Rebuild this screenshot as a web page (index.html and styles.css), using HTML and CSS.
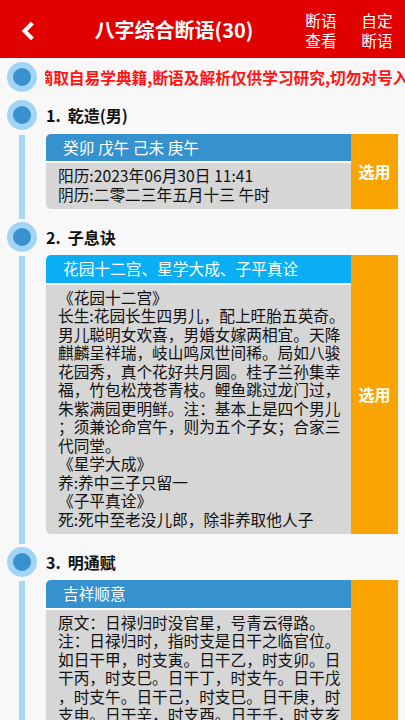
FILE: index.html
```html
<!DOCTYPE html>
<html lang="zh">
<head>
<meta charset="utf-8">
<title>八字综合断语</title>
<link rel="stylesheet" href="styles.css">
</head>
<body>
<header class="topbar">
  <div class="back">
    <svg width="14" height="18" viewBox="0 0 14 18"><polyline points="10,2.5 3.5,9 10,15.5" fill="none" stroke="#fff" stroke-width="4" stroke-linecap="square" stroke-linejoin="miter"/></svg>
  </div>
  <div class="title">八字综合断语(30)</div>
  <div class="tbtn">断语<br>查看</div>
  <div class="tbtn">自定<br>断语</div>
</header>

<div class="row marquee-row">
  <div class="dotcol"><span class="dot"></span></div>
  <div class="marquee"><span class="mtext">摘取自易学典籍,断语及解析仅供学习研究,切勿对号入座</span></div>
</div>

<section class="item">
  <div class="row">
    <div class="dotcol"><span class="dot"></span></div>
    <div class="ititle"><span class="num">1.</span>乾造(男)</div>
  </div>
  <div class="body">
    <div class="linecol"><span class="vline"></span></div>
    <div class="card">
      <div class="main">
        <div class="chead">癸卯 戊午 己未 庚午</div>
        <div class="ctext">阳历:2023年06月30日 11:41<br>阴历:二零二三年五月十三 午时</div>
      </div>
      <div class="pick">选用</div>
    </div>
  </div>
</section>

<section class="item">
  <div class="row">
    <div class="dotcol"><span class="dot"></span></div>
    <div class="ititle"><span class="num">2.</span>子息诀</div>
  </div>
  <div class="body">
    <div class="linecol"><span class="vline"></span></div>
    <div class="card">
      <div class="main">
        <div class="chead alt">花园十二宫、星学大成、子平真诠</div>
        <div class="ctext">《花园十二宫》<br>长生:花园长生四男儿，配上旺胎五英奇。<br>男儿聪明女欢喜，男婚女嫁两相宜。天降<br>麒麟呈祥瑞，岐山鸣凤世间稀。局如八骏<br>花园秀，真个花好共月圆。桂子兰孙集幸<br>福，竹包松茂苍青枝。鲤鱼跳过龙门过，<br>朱紫满园更明鲜。注：基本上是四个男儿<br>；须兼论命宫午，则为五个子女；合家三<br>代同堂。<br>《星学大成》<br>养:养中三子只留一<br>《子平真诠》<br>死:死中至老没儿郎，除非养取他人子</div>
      </div>
      <div class="pick">选用</div>
    </div>
  </div>
</section>

<section class="item">
  <div class="row">
    <div class="dotcol"><span class="dot"></span></div>
    <div class="ititle"><span class="num">3.</span>明通赋</div>
  </div>
  <div class="body">
    <div class="linecol"><span class="vline"></span></div>
    <div class="card">
      <div class="main">
        <div class="chead">吉祥顺意</div>
        <div class="ctext">原文：日禄归时没官星，号青云得路。<br>注：日禄归时，指时支是日干之临官位。<br>如日干甲，时支寅。日干乙，时支卯。日<br>干丙，时支巳。日干丁，时支午。日干戊<br>，时支午。日干己，时支巳。日干庚，时<br>支申。日干辛，时支酉。日干壬，时支亥<br>。日干癸，时支子。日禄归时，又不见官<br>星，是为青云得路之格。此命主平生多<br>得贵人相助，少年得志，名利双收，仕<br>途顺遂，步步高升。若柱中再见财星生<br>扶，则富贵两全；若见七杀混杂，则须<br>有制化方吉。大运行至官乡，亦可发福<br>，但不宜刑冲破害，否则反主波折。<br>总之以身旺禄强、无官杀为上格。</div>
      </div>
      <div class="pick">选用</div>
    </div>
  </div>
</section>
</body>
</html>
```

FILE: styles.css
```css
* { box-sizing: border-box; }
html, body { margin: 0; padding: 0; }
body {
  background: #f8f8f8;
  font-family: "Noto Sans CJK SC", "Noto Sans", sans-serif;
  color: #111;
  width: 405px;
  height: 720px;
  overflow: hidden;
}
.topbar {
  height: 58px;
  background: #e10000;
  color: #fff;
  display: flex;
  align-items: center;
}
.back {
  width: 55px;
  height: 58px;
  display: flex;
  align-items: center;
  padding-left: 21px;
  padding-top: 3px;
}
.title {
  flex: 1;
  text-align: center;
  font-size: 20px;
  font-weight: 700;
  line-height: 58px;
  padding-top: 2px;
}
.tbtn {
  width: 56px;
  text-align: center;
  font-size: 15.7px;
  line-height: 20px;
  padding-top: 3px;
}
.row {
  display: flex;
  align-items: center;
  height: 30px;
}
.marquee-row { margin-top: 4px; }
.dotcol {
  width: 46px;
  flex: none;
  padding-left: 7px;
  display: flex;
}
.dot {
  width: 30px;
  height: 30px;
  border-radius: 50%;
  background: #3a8fcf;
  border: 6px solid #a0d5f7;
  display: block;
}
.marquee {
  flex: 1;
  overflow: hidden;
  white-space: nowrap;
  margin-left: -1px;
}
.mtext {
  display: inline-block;
  margin-left: -7.5px;
  color: #ff1414;
  font-weight: 700;
  font-size: 15.7px;
}
.item { margin-top: 8px; }
.item + .item { margin-top: 0; }
.ititle {
  font-size: 16px;
  font-weight: 700;
  color: #111;
}
.num { margin-right: 7px; }
.body {
  display: flex;
  padding: 3.5px 7px 13px 0;
}
.linecol {
  width: 46px;
  flex: none;
  display: flex;
  padding: 1px 0 0 19px;
  margin-bottom: -10px;
}
.vline {
  width: 6px;
  background: #a4d9fa;
  display: block;
}
.card {
  flex: 1;
  display: flex;
}
.main {
  flex: 1;
  min-width: 0;
  display: flex;
  flex-direction: column;
  border-radius: 5px 0 0 5px;
  overflow: hidden;
  background: #d6d6d6;
}
.chead {
  background: #3592cf;
  color: #fff;
  font-size: 15.7px;
  line-height: 27.5px;
  height: 27.5px;
  padding-left: 17px;
  border-bottom: 2px solid #fff;
  box-sizing: content-box;
}
.chead.alt { background: #0aaef5; }
.ctext {
  padding: 4px 4px 4.5px 12px;
  font-size: 15.7px;
  line-height: 18.5px;
  white-space: nowrap;
  color: #111;
}
.pick {
  width: 47px;
  flex: none;
  background: #f9a400;
  color: #fff;
  font-weight: 700;
  font-size: 16px;
  display: flex;
  align-items: center;
  justify-content: center;
}
```
